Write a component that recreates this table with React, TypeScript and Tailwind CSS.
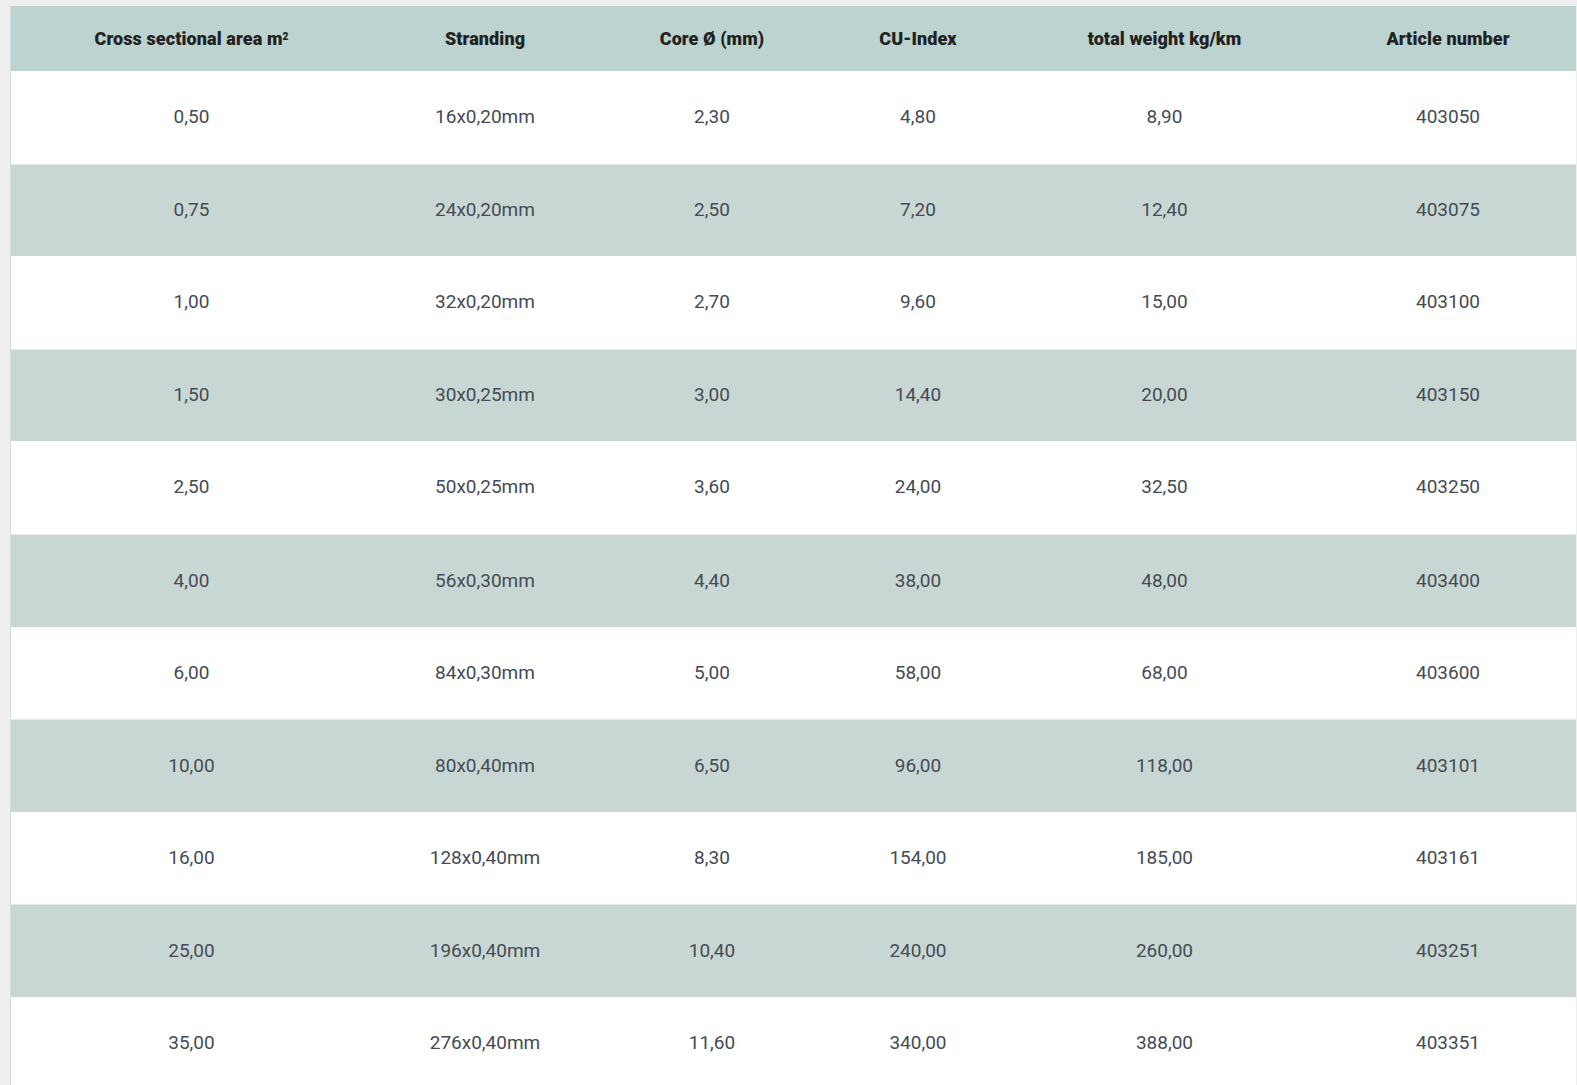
import React from "react";

const headers = [
  "Cross sectional area m²",
  "Stranding",
  "Core Ø (mm)",
  "CU-Index",
  "total weight kg/km",
  "Article number",
];

const rows: string[][] = [
  ["0,50", "16x0,20mm", "2,30", "4,80", "8,90", "403050"],
  ["0,75", "24x0,20mm", "2,50", "7,20", "12,40", "403075"],
  ["1,00", "32x0,20mm", "2,70", "9,60", "15,00", "403100"],
  ["1,50", "30x0,25mm", "3,00", "14,40", "20,00", "403150"],
  ["2,50", "50x0,25mm", "3,60", "24,00", "32,50", "403250"],
  ["4,00", "56x0,30mm", "4,40", "38,00", "48,00", "403400"],
  ["6,00", "84x0,30mm", "5,00", "58,00", "68,00", "403600"],
  ["10,00", "80x0,40mm", "6,50", "96,00", "118,00", "403101"],
  ["16,00", "128x0,40mm", "8,30", "154,00", "185,00", "403161"],
  ["25,00", "196x0,40mm", "10,40", "240,00", "260,00", "403251"],
  ["35,00", "276x0,40mm", "11,60", "340,00", "388,00", "403351"],
];

export default function App() {
  return (
    <div
      className="h-[1085px] w-[1577px] overflow-hidden bg-[#efefef] pt-[6px] pl-[10px]"
      style={{ fontFamily: "Roboto, 'Noto Sans', sans-serif" }}
    >
      <div className="w-[1566px] border-l border-[#cfe0dc] bg-white">
        <div className="grid h-[65px] grid-cols-[361px_226px_228px_184px_309px_258px] items-center bg-[#bcd3cf] text-[18px] font-black tracking-[0.1px] text-[#222]">
          {headers.map((h) => (
            <div key={h} className="text-center">
              {h === "Cross sectional area m²" ? (
                <>
                  Cross sectional area m<sup className="text-[10px]">2</sup>
                </>
              ) : (
                h
              )}
            </div>
          ))}
        </div>
        {rows.map((r, i) => (
          <div
            key={i}
            className={`grid h-[92.6px] grid-cols-[361px_226px_228px_184px_309px_258px] items-center text-[19px] text-[#454b55] ${
              i % 2 === 1 ? "bg-[#c9d7d4] border-t border-[#e4ecea]" : "bg-white"
            }`}
          >
            {r.map((c, j) => (
              <div key={j} className="text-center">
                {c}
              </div>
            ))}
          </div>
        ))}
      </div>
    </div>
  );
}
